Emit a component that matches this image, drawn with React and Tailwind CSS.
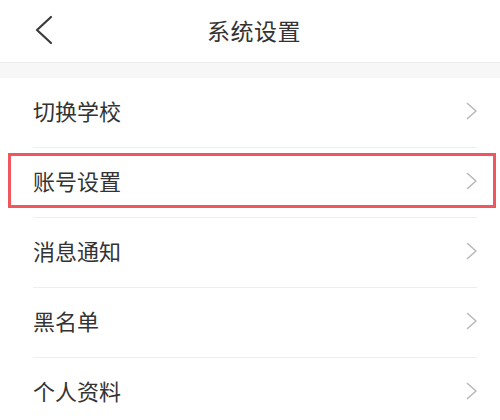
import React from "react";

const items = ["切换学校", "账号设置", "消息通知", "黑名单", "个人资料"];

function Chevron() {
  return (
    <svg width="12" height="18" viewBox="0 0 12 18" fill="none">
      <path d="M1.5 1.5 L10 9 L1.5 16.5" stroke="#b9b9b9" strokeWidth="1.6" strokeLinecap="round" strokeLinejoin="round" />
    </svg>
  );
}

export default function App() {
  return (
    <div className="w-[500px] h-[420px] overflow-hidden bg-white font-['Noto_Sans_CJK_SC','Noto_Sans',sans-serif] text-[#333]">
      {/* header */}
      <div className="h-[62px] flex items-center pb-[2px]">
        <div className="w-[80px] pl-[34px] flex items-center">
          <svg width="20" height="30" viewBox="0 0 20 30" fill="none">
            <path d="M17 2 L3 15 L17 28" stroke="#3a3a3a" strokeWidth="2.2" strokeLinecap="round" strokeLinejoin="round" />
          </svg>
        </div>
        <div className="flex-1 text-center pl-[8px] text-[23px] leading-none tracking-[0.5px]">系统设置</div>
        <div className="w-[80px]" />
      </div>
      <div className="h-[16px] bg-[#f7f7f7] border-t border-[#ededed]" />

      <div className="flex flex-col">
        {items.map((label, i) => (
          <div
            key={label}
            className="relative ml-[33px] mr-[23px] h-[70px] pb-[6px] flex items-center justify-between border-b border-[#eeeeee]"
          >
            <span className="text-[22px] leading-none">{label}</span>
            <span className="-mr-[1px] mt-[2px]"><Chevron /></span>
            {i === 1 && (
              <div className="absolute left-[-25px] right-[-19px] top-[5px] h-[55px] border-[3px] border-[#f0565e]" />
            )}
          </div>
        ))}
      </div>
    </div>
  );
}
